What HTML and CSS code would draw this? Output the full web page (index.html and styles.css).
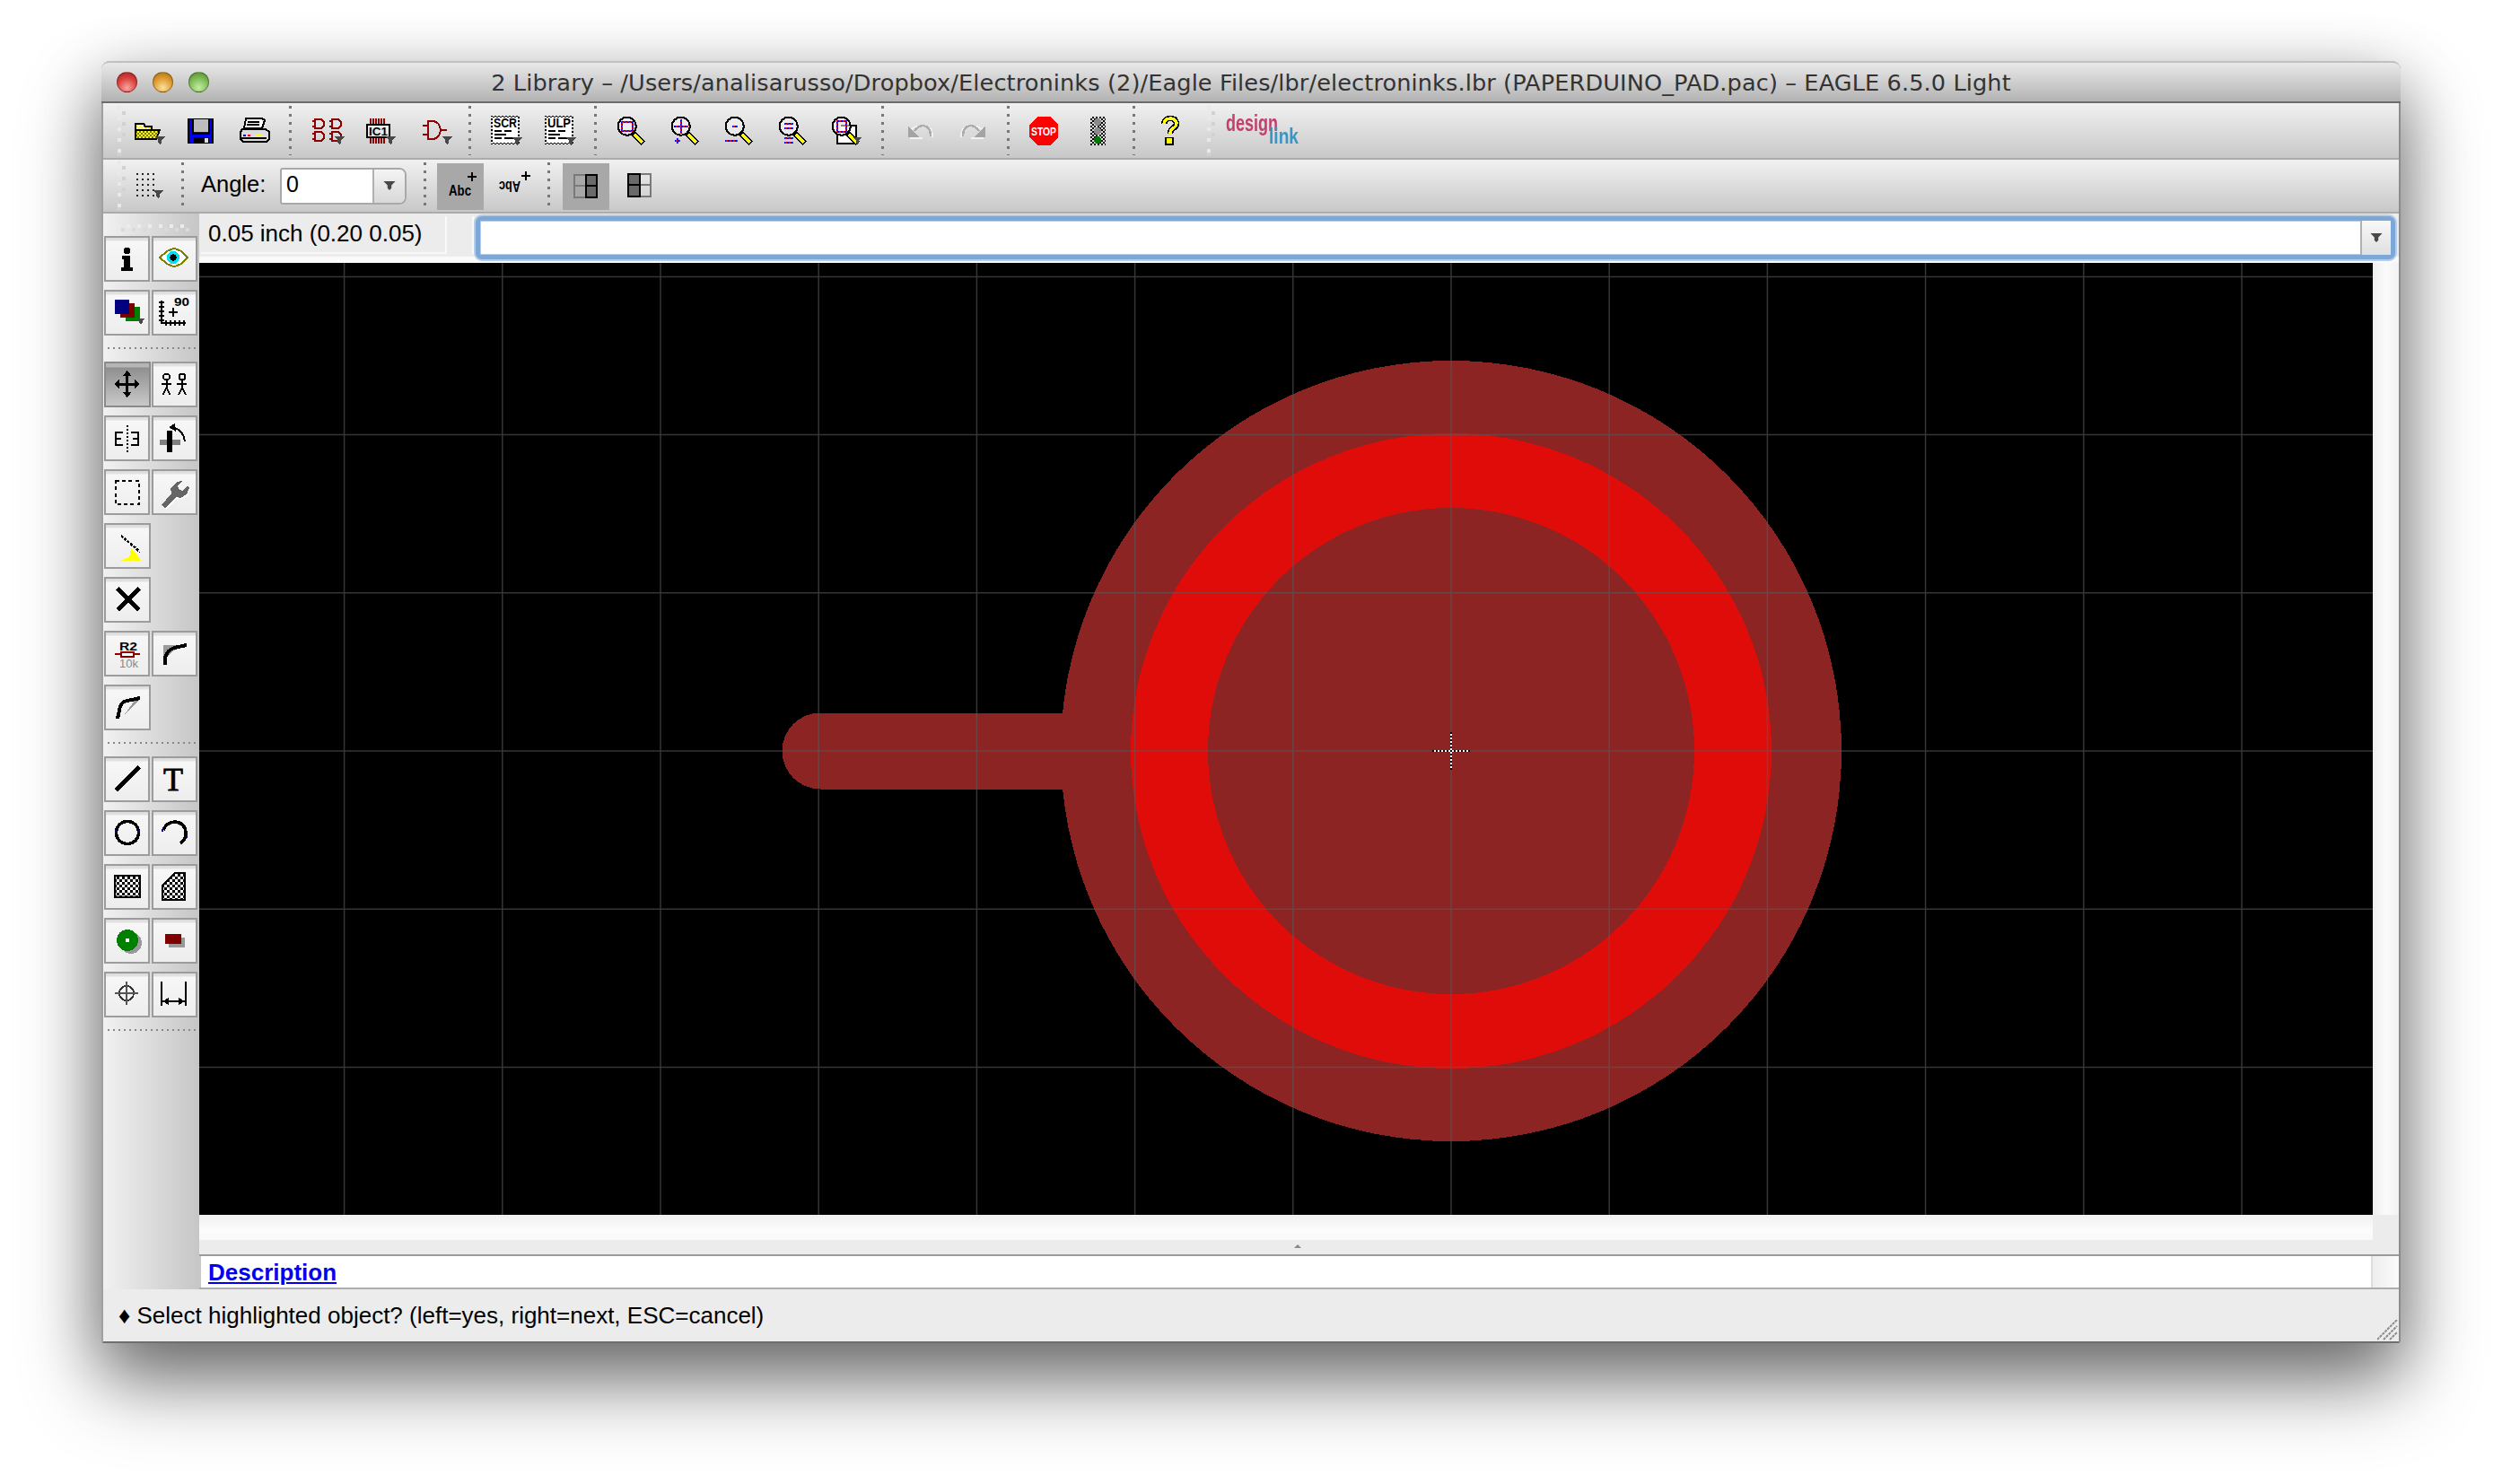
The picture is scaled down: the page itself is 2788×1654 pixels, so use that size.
FILE: index.html
```html
<!DOCTYPE html>
<html lang="en">
<head>
<meta charset="utf-8">
<title>EAGLE 6.5.0 Light</title>
<link rel="stylesheet" href="styles.css">
</head>
<body>
<svg class="defs" width="0" height="0" aria-hidden="true">
  <defs>
    <pattern id="rb" width="4" height="4" patternUnits="userSpaceOnUse"><rect width="4" height="4" fill="#f00"/><rect width="2" height="2" fill="#00f"/><rect x="2" y="2" width="2" height="2" fill="#00f"/></pattern>
    <pattern id="dy" width="4" height="4" patternUnits="userSpaceOnUse"><rect width="4" height="4" fill="#fff"/><rect width="2" height="2" fill="#ff0"/><rect x="2" y="2" width="2" height="2" fill="#ff0"/></pattern>
    <pattern id="dk" width="4" height="4" patternUnits="userSpaceOnUse"><rect width="4" height="4" fill="#777700"/><rect width="2" height="2" fill="#ff0"/><rect x="2" y="2" width="2" height="2" fill="#ff0"/></pattern>
    <pattern id="bw" width="6" height="6" patternUnits="userSpaceOnUse"><rect width="6" height="6" fill="#fff"/><rect width="3" height="3" fill="#000"/><rect x="3" y="3" width="3" height="3" fill="#000"/></pattern>
    <pattern id="bw4" width="4" height="4" patternUnits="userSpaceOnUse"><rect width="4" height="4" fill="#ddd"/><rect width="2" height="2" fill="#000"/><rect x="2" y="2" width="2" height="2" fill="#000"/></pattern>
    <symbol id="tri" viewBox="0 0 12 9"><polygon points="0,0 12,0 8,4 8,7 6,9 4,7 4,4" fill="#484848"/></symbol>
    <symbol id="mag" viewBox="0 0 44 40">
      <circle cx="17.7" cy="14.7" r="10" fill="#f4f4f4" fill-opacity=".55" stroke="#000" stroke-width="2"/>
      <path d="M25 23 L36 34" stroke="#000" stroke-width="7" fill="none"/>
      <path d="M26 24 L35 33" stroke="#ff0" stroke-width="3.4" fill="none"/>
    </symbol>
    <symbol id="gate" viewBox="0 0 14 12"><path d="M0 3h3M0 9h3M3 1h5q5 0 5 5t-5 5H3z" fill="none" stroke="#8b0000" stroke-width="2"/></symbol>
    <symbol id="grip" viewBox="0 0 10 56"><g fill="#e9e9e9"><rect x="0" y="0" width="4" height="4"/><rect x="0" y="12" width="4" height="4"/><rect x="0" y="24" width="4" height="4"/><rect x="0" y="36" width="4" height="4"/><rect x="0" y="48" width="4" height="4"/></g><g fill="#d2d2d2"><rect x="5" y="6" width="4" height="4"/><rect x="5" y="18" width="4" height="4"/><rect x="5" y="30" width="4" height="4"/><rect x="5" y="42" width="4" height="4"/><rect x="0" y="52" width="4" height="3"/></g></symbol>
    <symbol id="undo" viewBox="0 0 44 40">
      <path d="M13 28h14M21 15q-5 1-7 4M30 14q8 2 8 13" fill="none" stroke="#f2f2f2" stroke-width="2"/>
      <polygon points="11,15 11,27 24,27" fill="#a4a4a4"/>
      <path d="M18 20q4-6 10-6 8 1 8 12" fill="none" stroke="#acacac" stroke-width="2.4"/>
    </symbol>
  </defs>
</svg>

<div class="window">
  <header class="titlebar">
    <div class="lights"><span class="light light-r"></span><span class="light light-y"></span><span class="light light-g"></span></div>
    <div class="title">2 Library – /Users/analisarusso/Dropbox/Electroninks (2)/Eagle Files/lbr/electroninks.lbr (PAPERDUINO_PAD.pac) – EAGLE 6.5.0 Light</div>
  </header>

  <div class="toolbar tb1">
    <svg class="grip" viewBox="0 0 10 56"><use href="#grip"/></svg>
    <div class="tool"><svg class="ic" viewBox="0 0 44 40">
      <path d="M10 12h9l2 3h7v4h-18z" fill="url(#dy)" stroke="#000" stroke-width="2"/>
      <path d="M10 19h27l-4 10H10z" fill="url(#dk)" stroke="#000" stroke-width="2"/>
      <use href="#tri" x="31" y="26" width="12" height="9"/></svg></div>
    <div class="tool"><svg class="ic" viewBox="0 0 44 40">
      <rect x="8" y="6" width="29" height="28" fill="#000"/><rect x="10" y="7" width="25" height="26" fill="#00f"/>
      <rect x="15" y="7" width="16" height="14" fill="#bdbdbd"/><rect x="13" y="7" width="2" height="17" fill="#000"/><rect x="13" y="22" width="20" height="2" fill="#000"/><rect x="31" y="7" width="2" height="17" fill="#000"/>
      <rect x="15" y="27" width="17" height="7" fill="#000"/><rect x="27" y="28" width="4" height="5" fill="#ddd"/></svg></div>
    <div class="tool"><svg class="ic" viewBox="0 0 44 40">
      <path d="M13 6h18l3 2-3 9H11z" fill="#fff" stroke="#000" stroke-width="2"/><path d="M15 10h13M14 13h14" stroke="#000" stroke-width="1.6"/>
      <path d="M9 18h26l4 3v8l-3 3H10l-3-3v-8z" fill="#dcdcdc" stroke="#000" stroke-width="2"/>
      <rect x="10" y="24" width="3" height="2" fill="#00f"/><rect x="15" y="24" width="3" height="2" fill="#f00"/><rect x="24" y="24" width="7" height="2" fill="#ff0"/><path d="M8 28h28" stroke="#000" stroke-width="1.6"/></svg></div>
    <i class="sep"></i>
    <div class="tool"><svg class="ic" viewBox="0 0 44 40">
      <use href="#gate" x="7" y="6" width="14" height="12"/><use href="#gate" x="26" y="6" width="14" height="12"/><use href="#gate" x="7" y="20" width="14" height="12"/><use href="#gate" x="26" y="20" width="14" height="12"/>
      <use href="#tri" x="31" y="26" width="12" height="9"/></svg></div>
    <div class="tool"><svg class="ic" viewBox="0 0 44 40">
      <path d="M12 6v7M15 6v7M18 6v7M21 6v7M24 6v7M27 6v7M12 27v7M15 27v7M18 27v7M21 27v7M24 27v7M27 27v7" stroke="#8b0000" stroke-width="2"/>
      <rect x="8" y="13" width="25" height="14" fill="#fff" fill-opacity=".4" stroke="#000" stroke-width="2"/>
      <text class="ictx" x="10" y="25" font-size="12" textLength="21" lengthAdjust="spacingAndGlyphs">IC1</text>
      <use href="#tri" x="28" y="26" width="12" height="9"/></svg></div>
    <div class="tool"><svg class="ic" viewBox="0 0 44 40">
      <path d="M10 14h6M10 24h6M16 9h6q7 1 8 10-1 9-8 10h-6zM30 19h7" fill="none" stroke="#8b0000" stroke-width="2"/>
      <use href="#tri" x="31" y="26" width="12" height="9"/></svg></div>
    <i class="sep"></i>
    <div class="tool"><svg class="ic" viewBox="0 0 44 40">
      <rect x="7" y="4" width="30" height="30" fill="#fff" stroke="url(#bw4)" stroke-width="2"/>
      <text class="ictx" x="9" y="16" font-size="14" textLength="26" lengthAdjust="spacingAndGlyphs">SCR</text>
      <path d="M10 20h8M21 20h8M10 24h13M10 28h8M21 28h10" stroke="#000" stroke-width="2"/>
      <use href="#tri" x="29" y="27" width="12" height="9"/></svg></div>
    <div class="tool"><svg class="ic" viewBox="0 0 44 40">
      <rect x="7" y="4" width="30" height="30" fill="#fff" stroke="url(#bw4)" stroke-width="2"/>
      <text class="ictx" x="9" y="16" font-size="14" textLength="26" lengthAdjust="spacingAndGlyphs">ULP</text>
      <path d="M10 20h8M21 20h8M10 24h13M10 28h8M21 28h10" stroke="#000" stroke-width="2"/>
      <use href="#tri" x="29" y="27" width="12" height="9"/></svg></div>
    <i class="sep"></i>
    <div class="tool"><svg class="ic" viewBox="0 0 44 40"><use href="#mag" width="44" height="40"/>
      <rect x="11.500" y="9.500" width="12" height="10" fill="none" stroke="url(#rb)" stroke-width="2"/></svg></div>
    <div class="tool"><svg class="ic" viewBox="0 0 44 40"><use href="#mag" width="44" height="40"/>
      <rect x="10" y="14" width="16" height="2" fill="url(#rb)"/><rect x="17" y="7" width="2" height="16" fill="url(#rb)"/>
      <rect x="11" y="30" width="6" height="2" fill="url(#rb)"/><rect x="13" y="28" width="2" height="6" fill="url(#rb)"/></svg></div>
    <div class="tool"><svg class="ic" viewBox="0 0 44 40"><use href="#mag" width="44" height="40"/>
      <rect x="15" y="14" width="6" height="2" fill="url(#rb)"/><rect x="7" y="30" width="14" height="2" fill="url(#rb)"/></svg></div>
    <div class="tool"><svg class="ic" viewBox="0 0 44 40"><use href="#mag" width="44" height="40"/>
      <rect x="13" y="11" width="10" height="2" fill="url(#rb)"/><rect x="13" y="16" width="10" height="2" fill="url(#rb)"/>
      <rect x="13" y="27" width="10" height="2" fill="url(#rb)"/><rect x="13" y="32" width="10" height="2" fill="url(#rb)"/></svg></div>
    <div class="tool"><svg class="ic" viewBox="0 0 44 40">
      <path d="M16 14h17v20H12V24" fill="#fff" stroke="#000" stroke-width="2"/><use href="#mag" width="44" height="40" x="-1"/>
      <rect x="12" y="9" width="10" height="12" fill="none" stroke="url(#rb)" stroke-width="2"/>
      <use href="#tri" x="29" y="27" width="11" height="8"/></svg></div>
    <i class="sep"></i>
    <div class="tool"><svg class="ic" viewBox="0 0 44 40"><use href="#undo" width="44" height="40"/></svg></div>
    <div class="tool"><svg class="ic" viewBox="0 0 44 40"><g transform="translate(48 0) scale(-1 1)"><use href="#undo" width="44" height="40"/></g></svg></div>
    <i class="sep"></i>
    <div class="tool"><svg class="ic" viewBox="0 0 44 40">
      <polygon points="15,4 29,4 38,13 38,27 29,36 15,36 6,27 6,13" fill="#f00"/>
      <text class="ictx ictx-w" x="8" y="25" font-size="13" textLength="28" lengthAdjust="spacingAndGlyphs">STOP</text></svg></div>
    <div class="tool"><svg class="ic" viewBox="0 0 44 40">
      <rect x="14" y="4" width="17" height="32" fill="url(#bw4)"/>
      <circle cx="22" cy="10" r="4" fill="#8a8a8a"/><circle cx="22" cy="20" r="4" fill="#8a8a8a"/><circle cx="22" cy="30" r="4" fill="#007a00"/></svg></div>
    <i class="sep"></i>
    <div class="tool"><svg class="ic" viewBox="0 0 44 40">
      <path d="M16 12q1-6 7-6t7 5q0 4-4 6-3 2-3 6" fill="none" stroke="#000" stroke-width="6.5"/><rect x="17" y="27" width="10" height="9" fill="#000"/>
      <path d="M16 12q1-6 7-6t7 5q0 4-4 6-3 2-3 6" fill="none" stroke="#ff0" stroke-width="3.4"/><rect x="19" y="28" width="6" height="6" fill="#ff0"/></svg></div>
    <svg class="grip grip-logo" viewBox="0 0 10 56"><use href="#grip"/></svg>
    <svg class="logo" viewBox="0 0 92 48">
      <text class="lg lg-d" x="0" y="24" font-size="25" textLength="58" lengthAdjust="spacingAndGlyphs">design</text>
      <text class="lg lg-l" x="48" y="38" font-size="24" textLength="33" lengthAdjust="spacingAndGlyphs">link</text>
    </svg>
  </div>

  <div class="toolbar tb2">
    <svg class="grip" viewBox="0 0 10 56"><use href="#grip"/></svg>
    <div class="tool"><svg class="ic" viewBox="0 0 44 40">
      <path d="M11 7h24M11 13h24M11 19h24M11 25h24M11 31h24" stroke="#222" stroke-width="2" stroke-dasharray="2 4" fill="none"/>
      <use href="#tri" x="29" y="25" width="12" height="9"/></svg></div>
    <i class="sep"></i>
    <span class="lbl">Angle:</span>
    <div class="combo-s"><span class="combo-val">0</span><span class="combo-arr"><svg class="drop" viewBox="0 0 12 9"><use href="#tri" width="12" height="9"/></svg></span></div>
    <i class="sep sep-a"></i>
    <div class="tool tool-on"><svg class="ic" viewBox="0 0 44 40">
      <text class="ictx" x="9" y="30" font-size="16" textLength="25" lengthAdjust="spacingAndGlyphs">Abc</text>
      <path d="M30 9h10M35 4v10" stroke="#000" stroke-width="2"/></svg></div>
    <div class="tool"><svg class="ic" viewBox="0 0 44 40">
      <text class="ictx" x="-29" y="-15" font-size="16" textLength="24" lengthAdjust="spacingAndGlyphs" transform="rotate(180)">Abc</text>
      <path d="M30 9h10M35 4v10" stroke="#000" stroke-width="2"/></svg></div>
    <i class="sep sep-b"></i>
    <div class="tool tool-on"><svg class="ic" viewBox="0 0 44 40">
      <rect x="9" y="7" width="25" height="25" fill="none" stroke="#7a7a7a" stroke-width="2"/><path d="M9 19h13" stroke="#7a7a7a" stroke-width="2"/>
      <rect x="22" y="7" width="12" height="25" fill="#6a6a6a" stroke="#000" stroke-width="2"/><path d="M22 19h12" stroke="#000" stroke-width="2"/></svg></div>
    <div class="tool"><svg class="ic" viewBox="0 0 44 40">
      <rect x="9" y="7" width="25" height="25" fill="none" stroke="#7a7a7a" stroke-width="2"/><path d="M22 19h12" stroke="#7a7a7a" stroke-width="2"/>
      <rect x="9" y="7" width="13" height="25" fill="#6a6a6a" stroke="#000" stroke-width="2"/><path d="M9 19h13" stroke="#000" stroke-width="2"/></svg></div>
  </div>

  <div class="body">
    <aside class="dock">
      <svg class="grip-h" viewBox="0 0 82 8"><g fill="#ececec"><rect x="0" y="0" width="4" height="4"/><rect x="12" y="0" width="4" height="4"/><rect x="24" y="0" width="4" height="4"/><rect x="36" y="0" width="4" height="4"/><rect x="48" y="0" width="4" height="4"/><rect x="60" y="0" width="4" height="4"/><rect x="72" y="0" width="4" height="4"/></g><g fill="#dadada"><rect x="6" y="4" width="4" height="4"/><rect x="18" y="4" width="4" height="4"/><rect x="30" y="4" width="4" height="4"/><rect x="42" y="4" width="4" height="4"/><rect x="54" y="4" width="4" height="4"/><rect x="66" y="4" width="4" height="4"/><rect x="78" y="4" width="4" height="4"/></g></svg>

      <div class="row">
        <div class="btn"><svg class="bi" viewBox="0 0 47 47"><circle cx="23.500" cy="14.500" r="3.600"/><path d="M18 20h9v13h3v4H17v-4h3v-9h-2z"/></svg></div>
        <div class="btn"><svg class="bi" viewBox="0 0 47 47"><path d="M7 22l8-7 7-3h2l7 3 7 7-7 7-7 3h-2l-7-3z" fill="#fff" stroke="#808000" stroke-width="2"/><circle cx="22" cy="22" r="7" fill="#00e0f0"/><circle cx="22" cy="22" r="3.500"/><path d="M22 18v8M18 22h8" stroke="#000" stroke-width="1.400"/></svg></div>
      </div>
      <div class="row">
        <div class="btn"><svg class="bi" viewBox="0 0 47 47"><rect x="22" y="17" width="16" height="16" fill="#008000"/><rect x="16" y="13" width="16" height="16" fill="#7a0000"/><rect x="10" y="9" width="16" height="16" fill="#000080"/><use href="#tri" x="34" y="30" width="10" height="7"/></svg></div>
        <div class="btn"><svg class="bi" viewBox="0 0 47 47"><path d="M9 10v25h27" fill="none" stroke="#000" stroke-width="2"/><path d="M6 12h6M6 17h6M6 22h6M6 27h6M6 32h6M14 32v6M19 32v6M24 32v6M29 32v6M34 32v6M17 23h10M22 18v10" stroke="#000" stroke-width="2"/><text class="ictx" x="23" y="16" font-size="13" textLength="17" lengthAdjust="spacingAndGlyphs">90</text></svg></div>
      </div>
      <i class="sep-h sep-h1"></i>
      <div class="row">
        <div class="btn btn-on"><svg class="bi" viewBox="0 0 47 47"><path d="M22.700 12v22M12 23h22" stroke="#000" stroke-width="3" fill="none"/><path d="M22.700 8l5 6h-10zM22.700 38l5-6h-10zM8 23l6-5v10zM37 23l-6-5v10z"/></svg></div>
        <div class="btn"><svg class="bi" viewBox="0 0 47 47" fill="none" stroke="#000" stroke-width="2"><circle cx="14.500" cy="15" r="3.500"/><path d="M14.500 19v8M9 23h11M14.500 27l-4 8M14.500 27l4 8"/><circle cx="32" cy="15" r="3.500"/><path d="M32 19v8M26 23h11M32 27l-4 8M32 27l4 8"/></svg></div>
      </div>
      <div class="row">
        <div class="btn"><svg class="bi" viewBox="0 0 47 47" fill="none" stroke="#000" stroke-width="2"><path d="M19 17h-8v14h8M11 24h6M28 17h8v14h-8M36 24h-6"/><path d="M23.500 9v30" stroke-dasharray="2 2"/></svg></div>
        <div class="btn"><svg class="bi" viewBox="0 0 47 47"><rect x="7" y="25" width="23" height="6" fill="#808080"/><rect x="15" y="15" width="6" height="24"/><path d="M23 12q10 2 12 15" fill="none" stroke="#000" stroke-width="2"/><path d="M17 11l7-4 1 9z"/></svg></div>
      </div>
      <div class="row">
        <div class="btn"><svg class="bi" viewBox="0 0 47 47"><rect x="11" y="11" width="26" height="26" fill="none" stroke="#000" stroke-width="2" stroke-dasharray="4 3.200"/></svg></div>
        <div class="btn"><svg class="bi" viewBox="0 0 47 47"><path d="M9 38l11-13-1-6 7-7 6-1-5 6 2 4 4 1 5-6 2 3-3 7-7 4-5-1-12 12z" fill="#fff" transform="translate(1.500 1.500)"/><path d="M9 38l11-13-1-6 7-7 6-1-5 6 2 4 4 1 5-6 2 3-3 7-7 4-5-1-12 12z" fill="#666"/></svg></div>
      </div>
      <div class="row">
        <div class="btn btn-w"><svg class="bi" viewBox="0 0 47 47"><path d="M16 12l21 18" stroke="#000" stroke-width="2.500" stroke-dasharray="3 1.500" fill="none"/><path d="M15 40l10-4 2-9 5 4 6 9z" fill="#ff0"/></svg></div>
      </div>
      <div class="row">
        <div class="btn btn-w"><svg class="bi" viewBox="0 0 47 47"><path d="M12 11l24 24M36 11L12 35" stroke="#000" stroke-width="4.500"/></svg></div>
      </div>
      <div class="row">
        <div class="btn"><svg class="bi" viewBox="0 0 47 47"><text class="ictx" x="15" y="20" font-size="13" textLength="20" lengthAdjust="spacingAndGlyphs">R2</text><path d="M10 24h28" stroke="#8b0000" stroke-width="2"/><rect x="17" y="22" width="14" height="5" fill="#fff" stroke="#8b0000" stroke-width="1.500"/><text class="ictx ictx-g" x="15" y="39" font-size="13" textLength="21" lengthAdjust="spacingAndGlyphs">10k</text></svg></div>
        <div class="btn"><svg class="bi" viewBox="0 0 47 47"><polygon points="11,14 30,14 16,26 11,36" fill="#9a9a9a"/><path d="M13 36V28q2-8 10-11l14-3" fill="none" stroke="#000" stroke-width="4"/></svg></div>
      </div>
      <div class="row">
        <div class="btn btn-w"><svg class="bi" viewBox="0 0 47 47"><polygon points="15,36 37,14 33,13 18,34" fill="#9a9a9a"/><path d="M12 36l3-14q2-5 8-6l14-3" fill="none" stroke="#000" stroke-width="4"/></svg></div>
      </div>
      <i class="sep-h sep-h2"></i>
      <div class="row">
        <div class="btn"><svg class="bi" viewBox="0 0 47 47"><path d="M11 36L37 10" stroke="#000" stroke-width="5"/></svg></div>
        <div class="btn"><svg class="bi" viewBox="0 0 47 47"><text class="ictx-t" x="11" y="36" font-size="36">T</text></svg></div>
      </div>
      <div class="row">
        <div class="btn"><svg class="bi" viewBox="0 0 47 47"><circle cx="24" cy="23" r="12.500" fill="none" stroke="#000" stroke-width="3.500"/><rect x="10" y="20" width="2" height="3" fill="#00008b"/><rect x="36" y="20" width="2" height="3" fill="#00008b"/></svg></div>
        <div class="btn"><svg class="bi" viewBox="0 0 47 47"><path d="M11 20q4-9 13-9 12 1 12 13 0 7-6 11" fill="none" stroke="#000" stroke-width="3.500"/><rect x="9" y="19" width="2" height="3" fill="#00008b"/><rect x="36" y="26" width="2" height="3" fill="#00008b"/></svg></div>
      </div>
      <div class="row">
        <div class="btn"><svg class="bi" viewBox="0 0 47 47"><rect x="10" y="11" width="28" height="24" fill="url(#bw)" stroke="#000" stroke-width="2"/></svg></div>
        <div class="btn"><svg class="bi" viewBox="0 0 47 47"><polygon points="10,38 10,22 24,8 35,8 35,38" fill="url(#bw)" stroke="#000" stroke-width="2"/></svg></div>
      </div>
      <div class="row">
        <div class="btn"><svg class="bi" viewBox="0 0 47 47"><circle cx="28" cy="26" r="12" fill="#999"/><circle cx="24" cy="23" r="12" fill="#008000"/><rect x="22" y="21" width="4" height="4" fill="#fff"/></svg></div>
        <div class="btn"><svg class="bi" viewBox="0 0 47 47"><rect x="17" y="20" width="18" height="11" fill="#999"/><rect x="13" y="16" width="18" height="11" fill="#800000"/></svg></div>
      </div>
      <div class="row">
        <div class="btn"><svg class="bi" viewBox="0 0 47 47"><circle cx="23" cy="22" r="8" fill="none" stroke="#333" stroke-width="2"/><path d="M23 9v26M10 22h26" stroke="#555" stroke-width="2"/></svg></div>
        <div class="btn"><svg class="bi" viewBox="0 0 47 47"><path d="M9 9v27M36 9v27M10 31h25" stroke="#000" stroke-width="2.400"/><path d="M10 31l7-4v8zM35 31l-7-4v8z"/></svg></div>
      </div>
      <i class="sep-h sep-h3"></i>
    </aside>

    <main class="main">
      <div class="cmdrow">
        <div class="coord">0.05 inch (0.20 0.05)</div>
        <div class="coord-2"></div>
        <div class="cmd"><span class="cmd-in"></span><span class="cmd-arr"><svg class="drop" viewBox="0 0 12 9"><use href="#tri" width="12" height="9"/></svg></span></div>
      </div>
      <div class="viewrow">
        <svg class="canvas" width="2422" height="1061" viewBox="0 0 2422 1061">
          <rect width="2422" height="1061" fill="#000"/>
          <g class="copper">
            <circle cx="1395" cy="544" r="435"/>
            <path d="M1000 501.500H692a42.500 42.500 0 0 0 0 85H1000z"/>
          </g>
          <ellipse class="pad" cx="1395" cy="544" rx="357" ry="354"/>
          <circle class="copper" cx="1395" cy="544" r="271"/>
          <path class="gridl" d="M161.600 0V1061M337.800 0V1061M514 0V1061M690.200 0V1061M866.400 0V1061M1042.600 0V1061M1218.800 0V1061M1395 0V1061M1571.200 0V1061M1747.400 0V1061M1923.600 0V1061M2099.800 0V1061M2276 0V1061M0 15.400H2422M0 191.600H2422M0 367.800H2422M0 544H2422M0 720.200H2422M0 896.400H2422"/>
          <path class="cross-w" d="M1374 544H1416M1395 523V565"/>
          <path class="cross-b" d="M1374 544H1416M1395 523V565"/>
        </svg>
        <div class="vscroll"></div>
      </div>
      <div class="hscrollrow"><div class="hscroll"></div></div>
      <div class="splitter"><i class="split-arrow"></i></div>
      <div class="descrow">
        <div class="desc"><a class="desc-link" href="#">Description</a></div>
        <div class="desc-scroll"></div>
      </div>
    </main>
  </div>

  <footer class="status">
    <span class="status-txt">♦ Select highlighted object? (left=yes, right=next, ESC=cancel)</span>
    <svg class="resize" viewBox="0 0 24 24"><path d="M0 22L22 0M7 22L22 7M14 22l8-8" stroke="#8a8a8a" stroke-width="2" stroke-dasharray="3 1" fill="none"/></svg>
  </footer>
</div>
</body>
</html>
```

FILE: styles.css
```css
* { box-sizing: border-box; }
html, body { margin: 0; padding: 0; background: #fff; }
body { width: 2788px; height: 1654px; overflow: hidden; padding: 68px 0 0 113px; font-family: "Liberation Sans", Arial, sans-serif; color: #000; }
.defs { position: absolute; }

.window {
  width: 2562px; height: 1429px; display: flex; flex-direction: column;
  border-radius: 10px 10px 3px 3px; background: #ececec;
  box-shadow: 0 44px 90px 0 rgba(0,0,0,.42), 0 24px 70px 0 rgba(0,0,0,.32);
  border-right: 2px solid #8c8c8c; border-left: 2px solid #a0a0a0; border-bottom: 2px solid #6e6e6e;
}

.titlebar {
  height: 47px; flex: none; display: flex; align-items: center; justify-content: center; position: relative;
  background: linear-gradient(#e9e9e9, #b3b3b3);
  border-top: 2px solid #c0c0c0; border-bottom: 2px solid #6c6c6c;
  border-radius: 9px 9px 0 0; margin: 0 -2px;
}
.lights { position: absolute; left: 17px; top: 10px; display: flex; gap: 17px; }
.light { width: 23px; height: 23px; border-radius: 50%; border: 1px solid rgba(0,0,0,.3); }
.light-r { background: radial-gradient(circle at 50% 80%, #fba4a0, #d9413d 55%, #a41f1d); }
.light-y { background: radial-gradient(circle at 50% 80%, #fde0a0, #dc9a2e 55%, #a96c10); }
.light-g { background: radial-gradient(circle at 50% 80%, #c5eda4, #7dba55 55%, #4c8a2c); }
.title { font-family: "DejaVu Sans", sans-serif; font-size: 25.600px; letter-spacing: .1px; color: #333; white-space: nowrap; }

.toolbar { flex: none; display: flex; align-items: center; padding-left: 16px; background: linear-gradient(#f1f1f1, #c8c8c8); border-bottom: 2px solid #ababab; }
.tb1 { height: 63px; }
.tb2 { height: 60px; }
.grip { width: 10px; height: 56px; flex: none; margin-right: -8px; }
.tool { width: 60px; height: 100%; flex: none; display: flex; align-items: center; justify-content: center; }
.tool-on { background: linear-gradient(90deg, transparent 4px, #a8a8a8 4px, #a8a8a8 56px, transparent 56px); margin: 2px 0 0; height: 52px; }
.ic { width: 44px; height: 40px; shape-rendering: crispEdges; }
.ictx { font-family: "Liberation Sans", sans-serif; font-weight: 700; fill: #000; text-rendering: optimizeSpeed; }
.ictx-w { fill: #fff; }
.ictx-g { fill: #888; font-weight: 400; }
.ictx-t { font-family: "Liberation Serif", serif; fill: #000; stroke: #000; stroke-width: .8; }
.sep { width: 20px; align-self: stretch; flex: none; margin: 3px 0; background: repeating-linear-gradient(#777 0 3px, transparent 3px 9px) center / 3px 100% no-repeat; }
.sep-a { margin-left: 10px; }
.sep-b { margin-left: -2px; margin-right: 2px; }
.grip-logo { margin: 0 11px 0 12px; }
.logo { width: 92px; height: 48px; flex: none; filter: blur(.6px); }
.lg { font-family: "Liberation Sans", sans-serif; font-weight: 700; }
.lg-d { fill: #c2406c; }
.lg-l { fill: #3796c4; }

.lbl { font-size: 25.500px; margin-left: 11px; width: 72px; flex: none; white-space: nowrap; position: relative; top: -2px; }
.combo-s { width: 141px; height: 41px; margin-left: 16px; flex: none; display: flex; border: 2px solid #a9a9a9; border-radius: 3px 8px 8px 3px; background: #fff; }
.combo-val { flex: 1; font-size: 25px; padding-left: 5px; line-height: 32px; }
.combo-arr { width: 36px; flex: none; display: flex; align-items: center; justify-content: center; border-left: 2px solid #b0b0b0; background: linear-gradient(#f4f4f4, #d8d8d8); border-radius: 0 6px 6px 0; }
.drop { width: 14px; height: 10px; }

.body { flex: 1; min-height: 0; display: flex; }
.dock { width: 107px; flex: none; padding: 12px 0 0 1px; display: flex; flex-direction: column; background: linear-gradient(90deg, #f1f1f1, #c6c6c6); }
.grip-h { width: 82px; height: 8px; flex: none; margin: 0 0 5px 13px; }
.row { display: flex; gap: 2px; margin-bottom: 9px; height: 51px; flex: none; }
.btn { width: 51px; height: 51px; flex: none; border: 2px solid #9c9c9c; background: linear-gradient(#dcdcdc 0, #e2e2e2 3px, #f7f7f7 4px, #ededed); display: flex; align-items: center; justify-content: center; }
.btn-w { width: 52px; }
.btn-on { width: 52px; margin-right: -1px; border-color: #8a8a8a; background: linear-gradient(#b5b5b5 0, #b5b5b5 4px, #8f8f8f 5px, #c9c9c9); }
.bi { width: 47px; height: 47px; shape-rendering: crispEdges; }
.sep-h { display: block; flex: none; height: 2px; margin-left: 4px; width: 98px; background: repeating-linear-gradient(90deg, #888 0 2px, transparent 2px 6px); }
.sep-h1 { margin-top: 4px; margin-bottom: 14px; }
.sep-h2 { margin-top: 3.500px; margin-bottom: 14.500px; }
.sep-h3 { margin-top: 4px; }

.main { flex: 1; min-width: 0; display: flex; flex-direction: column; }
.cmdrow { height: 55px; flex: none; display: flex; align-items: flex-start; padding: 3px 0 0 2px; background: linear-gradient(#ececec 48px, #fafafa 48px); }
.coord { width: 274px; height: 42px; flex: none; font-size: 26px; line-height: 39px; padding-left: 8px; white-space: nowrap; border-right: 2px solid #fafafa; border-bottom: 2px solid #f8f8f8; }
.coord-2 { width: 30px; height: 42px; flex: none; border-right: 2px solid #fafafa; }
.cmd { width: 2139px; height: 48px; flex: none; margin-left: 2px; display: flex; border: 5px solid #7ba8d6; border-radius: 7px; background: #fff; box-shadow: 0 0 0 2px #b8cde4, inset 0 0 0 1px #b8cde4; }
.cmd-in { flex: 1; }
.cmd-arr { width: 34px; flex: none; display: flex; align-items: center; justify-content: center; border-left: 2px solid #b0b0b0; background: linear-gradient(#f8f8f8, #e0e0e0); }
.viewrow { height: 1061px; flex: none; display: flex; }
.canvas { display: block; flex: none; shape-rendering: crispEdges; }
.copper { fill: #8c2424; }
.pad { fill: #e00c0a; }
.gridl { stroke: #5a5a5a; stroke-opacity: .6; stroke-width: 1.500; fill: none; shape-rendering: auto; }
.cross-w { stroke: #fff; stroke-width: 2; fill: none; }
.cross-b { stroke: #000; stroke-width: 2; fill: none; stroke-dasharray: 2 2; }
.vscroll { flex: 1; background: linear-gradient(90deg, #eee, #fbfbfb 50%, #f2f2f2); }
.hscrollrow { height: 28px; flex: none; }
.hscroll { width: 2422px; height: 100%; background: linear-gradient(#f0f0f0, #fcfcfc 60%, #f8f8f8); }
.splitter { height: 18px; flex: none; display: flex; justify-content: center; border-bottom: 2px solid #9a9a9a; padding-right: 4px; }
.split-arrow { width: 0; height: 0; margin-top: 5px; border-left: 4px solid transparent; border-right: 4px solid transparent; border-bottom: 4px solid #8a8a8a; }
.descrow { flex: 1; min-height: 0; display: flex; border-bottom: 2px solid #adadad; }
.desc { flex: none; width: 2420px; background: #fff; border-left: 2px solid #c8c8c8; padding-left: 8px; font-size: 26px; font-weight: 700; line-height: 36px; }
.desc-link { color: #0000ee; }
.desc-scroll { flex: 1; border-left: 2px solid #ddd; background: linear-gradient(90deg, #eee, #fbfbfb); }

.status { height: 58px; flex: none; display: flex; align-items: center; padding-left: 17px; position: relative; background: #ececec; font-size: 26px; }
.status-txt { white-space: nowrap; }
.resize { position: absolute; right: 0; bottom: 0; width: 24px; height: 24px; }
```
